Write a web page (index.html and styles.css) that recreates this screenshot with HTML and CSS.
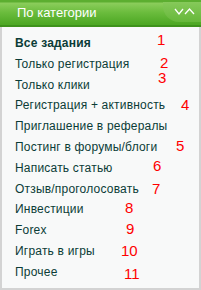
FILE: index.html
```html
<!DOCTYPE html>
<html lang="ru">
<head>
    <meta charset="UTF-8">
    <title>По категории</title>
    <link rel="stylesheet" href="styles.css">
</head>
<body>
    <div class="box">
        <div class="box-head">
            <span class="box-title">По категории</span>
            <svg class="toggle" width="22" height="8" viewBox="0 0 22 8">
                <polyline points="1,1 5,6 9,1" fill="none" stroke="#fff" stroke-width="1.3"/>
                <polyline points="11,6 15.5,1 20,6" fill="none" stroke="#fff" stroke-width="1.3"/>
            </svg>
        </div>
        <ul class="cat-list">
            <li class="active">Все задания <span class="mark m1">1</span></li>
            <li>Только регистрация <span class="mark m2">2</span></li>
            <li>Только клики <span class="mark m3">3</span></li>
            <li>Регистрация + активность <span class="mark m4">4</span></li>
            <li>Приглашение в рефералы</li>
            <li>Постинг в форумы/блоги <span class="mark m5">5</span></li>
            <li>Написать статью <span class="mark m6">6</span></li>
            <li>Отзыв/проголосовать <span class="mark m7">7</span></li>
            <li>Инвестиции <span class="mark m8">8</span></li>
            <li>Forex <span class="mark m9">9</span></li>
            <li>Играть в игры <span class="mark m10">10</span></li>
            <li>Прочее <span class="mark m11">11</span></li>
        </ul>
    </div>
</body>
</html>
```

FILE: styles.css
```css
* {
    margin: 0;
    padding: 0;
    box-sizing: border-box;
}

body {
    font-family: "Liberation Sans", Arial, sans-serif;
    background: #fff;
}

.box {
    width: 201px;
    height: 290px;
    display: flex;
    flex-direction: column;
}

/* зелёная шапка */
.box-head {
    position: relative;
    height: 27px;
    display: flex;
    align-items: center;
    padding-left: 17px;
    padding-bottom: 1px;
    background: linear-gradient(#5cae30 0, #5cae30 2px, #8ccd5c 3px, #6cbd3e 12px, #4ea824 24px);
    border-bottom: 2px solid #3e921b;
    overflow: hidden;
}

/* светлая вкладка справа */
.box-head::before {
    content: "";
    position: absolute;
    right: -2px;
    top: 2px;
    width: 40px;
    height: 20px;
    background: linear-gradient(#86c95a, #66b83a);
    border-bottom-left-radius: 16px;
}

.box-title {
    color: #fff;
    font-size: 13px;
    position: relative;
}

.toggle {
    position: absolute;
    right: 5px;
    top: 8px;
}

/* список категорий */
.cat-list {
    flex: 1;
    list-style: none;
    background: #f8f9f9;
    border: 2px solid #d3d3d3;
    border-top: none;
    padding: 6px 0 0 13px;
}

.cat-list li {
    position: relative;
    height: 20.8px;
    line-height: 20.8px;
    font-size: 12px;
    letter-spacing: 0.2px;
    color: #0b3c37;
}

.cat-list li.active {
    font-weight: bold;
}

/* красные пометки */
.mark {
    position: absolute;
    color: #f00;
    font-size: 15px;
    font-weight: normal;
    letter-spacing: 0;
    line-height: 15px;
}

.m1 { left: 142px; top: -1px; }
.m2 { left: 145px; top: 1px; }
.m3 { left: 143px; top: -5px; }
.m4 { left: 166px; top: 2px; }
.m5 { left: 161px; top: 1px; }
.m6 { left: 138px; top: 0; }
.m7 { left: 137px; top: 2px; }
.m8 { left: 110px; top: 1px; }
.m9 { left: 111px; top: 1px; }
.m10 { left: 106px; top: 2px; }
.m11 { left: 109px; top: 4px; }
```
